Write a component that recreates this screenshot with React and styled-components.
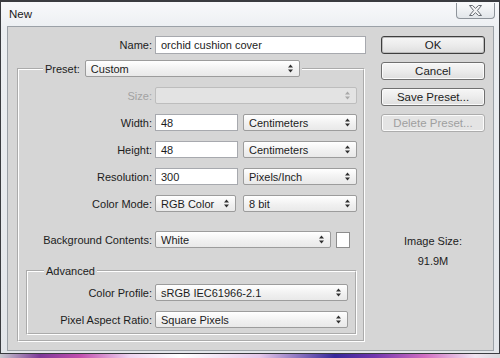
import { createGlobalStyle, styled } from "styled-components";

const GlobalStyle = createGlobalStyle`
  * { box-sizing: border-box; }
  html, body { margin: 0; padding: 0; }
  body {
    width: 500px;
    height: 358px;
    overflow: hidden;
    font-family: "Liberation Sans", Arial, sans-serif;
    font-size: 11px;
    color: #1c1c1c;
    background: linear-gradient(
      to right,
      #c9c9cf 0%,
      #7e3a98 8%,
      #c24fae 16%,
      #efd3ee 26%,
      #ffffff 36%,
      #e6c6e8 52%,
      #36279a 67%,
      #7236ae 75%,
      #d26fc2 85%,
      #f1e3f0 95%,
      #d8d8dc 100%
    );
  }
`;

const Window = styled.div`
  width: 500px;
  height: 354px;
  border: 1px solid #3a3c40;
  border-top-width: 2px;
  background: linear-gradient(#f8f9fb, #eceff2 26px, #e3e6ea);
  padding: 0 5px 2px 6px;
  display: flex;
  flex-direction: column;
`;

const TitleBar = styled.div`
  height: 24px;
  display: flex;
  justify-content: space-between;
  align-items: flex-start;
  padding-left: 2px;
`;

const Title = styled.span`
  margin-top: 5px;
  font-size: 11.5px;
  line-height: 14px;
  color: #1a1a1a;
`;

const CloseButton = styled.div`
  width: 39px;
  height: 16px;
  margin: 1px -1px 0 0;
  border: 1px solid #8e949b;
  border-top: none;
  border-radius: 0 0 4px 4px;
  background: linear-gradient(#fafbfc, #e2e6ea);
  display: flex;
  align-items: center;
  justify-content: center;
`;

const Body = styled.div`
  flex: 1;
  background: #d6d6d6;
  border: 1px solid #9ba1a7;
  display: flex;
  padding: 9px 8px 0 9px;
`;

const Main = styled.div`
  width: 349px;
  display: flex;
  flex-direction: column;
  align-items: flex-start;
`;

const Side = styled.div`
  width: 105px;
  margin-left: 15px;
  display: flex;
  flex-direction: column;
  gap: 8px;
`;

const Row = styled.div`
  display: grid;
  grid-template-columns: ${(p) => p.$label}px auto;
  column-gap: 3px;
  align-items: center;
  margin-top: ${(p) => p.$top || 0}px;
`;

const Label = styled.span`
  text-align: right;
  white-space: nowrap;
  color: ${(p) => (p.$disabled ? "#a2a2a2" : "#1c1c1c")};
`;

const Controls = styled.div`
  display: flex;
  align-items: center;
  gap: ${(p) => p.$gap || 5}px;
`;

const Field = styled.div`
  width: ${(p) => p.$w}px;
  height: ${(p) => p.$h || 17}px;
  background: #fff;
  border: 1px solid #a7a9ae;
  padding-left: 5px;
  display: flex;
  align-items: center;
  white-space: nowrap;
  overflow: hidden;
`;

const SelectBox = styled.div`
  width: ${(p) => p.$w}px;
  height: 17px;
  border: 1px solid ${(p) => (p.$disabled ? "#bdbdbd" : "#9c9c9c")};
  border-radius: 2px;
  background: ${(p) =>
    p.$disabled ? "#e3e3e3" : "linear-gradient(#ffffff, #f0f0f0 60%, #e9e9e9)"};
  padding: 0 6px 0 5px;
  display: flex;
  align-items: center;
  justify-content: space-between;
  white-space: nowrap;
  color: ${(p) => (p.$disabled ? "#a2a2a2" : "#1c1c1c")};
`;

const Swatch = styled.div`
  width: 14px;
  height: 16px;
  background: #fff;
  border: 1px solid #8d8d8d;
`;

const Group = styled.fieldset`
  width: ${(p) => p.$w};
  min-width: 0;
  margin: ${(p) => p.$m};
  padding: ${(p) => p.$p};
  border: 2px groove #ffffff;
`;

const Legend = styled.legend`
  margin-left: ${(p) => p.$offset}px;
  padding: 0 2px;
  line-height: 14px;
`;

const LegendRow = styled.div`
  display: flex;
  align-items: center;
  gap: 5px;
`;

const Rows = styled.div`
  display: flex;
  flex-direction: column;
  gap: 10px;
`;

const Button = styled.div`
  height: 18px;
  border: 1px solid ${(p) => (p.$default ? "#3e3e3e" : p.$disabled ? "#acacac" : "#707070")};
  border-radius: 3px;
  background: ${(p) =>
    p.$disabled ? "#e4e4e4" : "linear-gradient(#f6f6f6, #ececec 50%, #dedede)"};
  box-shadow: ${(p) => (p.$default ? "inset 0 0 0 1px #bcbcbc" : "inset 0 0 0 1px #fbfbfb")};
  color: ${(p) => (p.$disabled ? "#9f9f9f" : "#1c1c1c")};
  display: flex;
  align-items: center;
  justify-content: center;
  font-size: 11.5px;
`;

const ImageInfo = styled.div`
  margin-top: 94px;
  text-align: center;
  line-height: 14px;
  display: flex;
  flex-direction: column;
  gap: 6px;
`;

const Arrows = ({ disabled }) => (
  <svg width="5" height="9" viewBox="0 0 5 9">
    <path d="M0 3.5 L2.5 0.5 L5 3.5 Z M0 5.5 L2.5 8.5 L5 5.5 Z" fill={disabled ? "#a8a8a8" : "#303030"} />
  </svg>
);

const Select = ({ w, value, disabled }) => (
  <SelectBox $w={w} $disabled={disabled}>
    <span>{value}</span>
    <Arrows disabled={disabled} />
  </SelectBox>
);

const CloseIcon = () => (
  <svg width="13" height="11" viewBox="0 0 13 11">
    <polygon
      points="0.5,0.5 3.5,0.5 6.5,3.3 9.5,0.5 12.5,0.5 8.4,5.5 12.5,10.5 9.5,10.5 6.5,7.7 3.5,10.5 0.5,10.5 4.6,5.5"
      fill="#f3f4f5"
      stroke="#666b72"
      strokeWidth="1"
      strokeLinejoin="round"
    />
  </svg>
);

export default function App() {
  return (
    <>
      <GlobalStyle />
      <Window>
        <TitleBar>
          <Title>New</Title>
          <CloseButton>
            <CloseIcon />
          </CloseButton>
        </TitleBar>
        <Body>
          <Main>
            <Row $label={135}>
              <Label>Name:</Label>
              <Field $w={211} $h={18}>orchid cushion cover</Field>
            </Row>
            <Group $w="348px" $m="6px 0 0 0" $p="10px 0 0 0">
              <Legend $offset={24}>
                <LegendRow>
                  <Label>Preset:</Label>
                  <Select w={215} value="Custom" />
                </LegendRow>
              </Legend>
              <Rows>
                <Row $label={133}>
                  <Label $disabled>Size:</Label>
                  <Select w={202} value="" disabled />
                </Row>
                <Row $label={133}>
                  <Label>Width:</Label>
                  <Controls>
                    <Field $w={83}>48</Field>
                    <Select w={114} value="Centimeters" />
                  </Controls>
                </Row>
                <Row $label={133}>
                  <Label>Height:</Label>
                  <Controls>
                    <Field $w={83}>48</Field>
                    <Select w={114} value="Centimeters" />
                  </Controls>
                </Row>
                <Row $label={133}>
                  <Label>Resolution:</Label>
                  <Controls>
                    <Field $w={83}>300</Field>
                    <Select w={114} value="Pixels/Inch" />
                  </Controls>
                </Row>
                <Row $label={133}>
                  <Label>Color Mode:</Label>
                  <Controls $gap={7}>
                    <Select w={81} value="RGB Color" />
                    <Select w={114} value="8 bit" />
                  </Controls>
                </Row>
                <Row $label={133} $top={9}>
                  <Label>Background Contents:</Label>
                  <Controls>
                    <Select w={176} value="White" />
                    <Swatch />
                  </Controls>
                </Row>
              </Rows>
              <Group $w="auto" $m="16px 6px 5px 7px" $p="6px 0 5px 0">
                <Legend $offset={16}>Advanced</Legend>
                <Rows>
                  <Row $label={124}>
                    <Label>Color Profile:</Label>
                    <Select w={193} value="sRGB IEC61966-2.1" />
                  </Row>
                  <Row $label={124}>
                    <Label>Pixel Aspect Ratio:</Label>
                    <Select w={193} value="Square Pixels" />
                  </Row>
                </Rows>
              </Group>
            </Group>
          </Main>
          <Side>
            <Button $default>OK</Button>
            <Button>Cancel</Button>
            <Button>Save Preset...</Button>
            <Button $disabled>Delete Preset...</Button>
            <ImageInfo>
              <span>Image Size:</span>
              <span>91.9M</span>
            </ImageInfo>
          </Side>
        </Body>
      </Window>
    </>
  );
}
